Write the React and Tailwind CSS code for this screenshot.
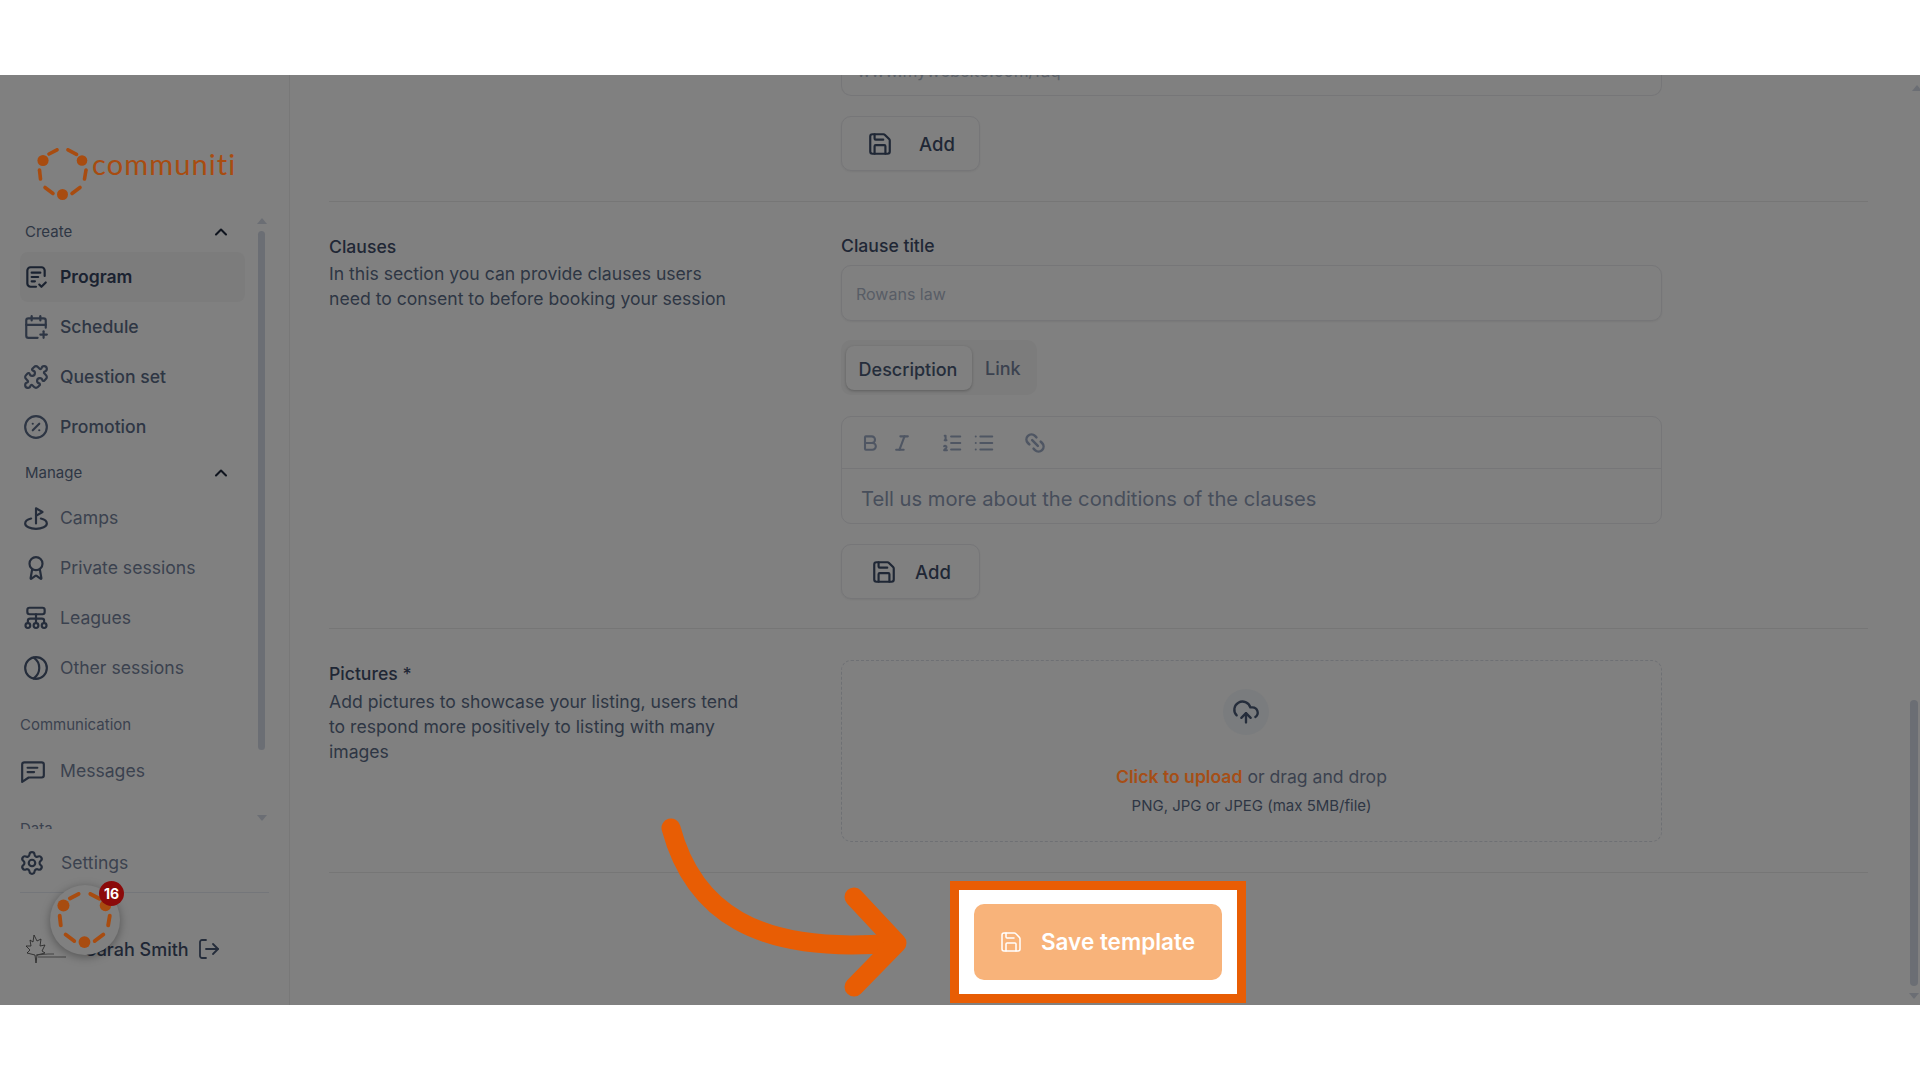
import React from "react";
import { Award, Bold, CalendarPlus, ChevronUp, CirclePercent, CloudUpload, Italic, Link2, List, ListOrdered, LogOut, Puzzle, Save, Settings } from "lucide-react";

const Ring = ({ className }) => (
  <svg viewBox="0 0 52 52" className={className} fill="none">
    <g stroke="#a84c10" strokeWidth="3.6" strokeLinecap="round">
      <path d="M12 6 L20 1.800" />
      <path d="M31 1.800 L39.500 6.300" />
      <path d="M2.500 22 L3.500 31" />
      <path d="M49 22 L47.500 31" />
      <path d="M8 39.500 L16 45.500" />
      <path d="M35 45.500 L43 39.500" />
    </g>
    <circle cx="6" cy="12.500" r="5.600" fill="#a84c10" />
    <circle cx="45" cy="12.500" r="5.300" fill="#a84c10" />
    <circle cx="25.500" cy="46.500" r="5.500" fill="#a84c10" />
  </svg>
);

const ProgramIcon = (p) => (
  <svg viewBox="0 0 24 24" fill="none" stroke="currentColor" strokeWidth="2" strokeLinecap="round" strokeLinejoin="round" {...p}>
    <path d="M20 11V6a3 3 0 0 0-3-3H7a3 3 0 0 0-3 3v12a3 3 0 0 0 3 3h5" />
    <path d="M8 8h8M8 12h6M8 16h3" />
    <path d="M15 19l2 2 4-4" />
  </svg>
);
const CampsIcon = (p) => (
  <svg viewBox="0 0 24 24" fill="none" stroke="currentColor" strokeWidth="2" strokeLinecap="round" strokeLinejoin="round" {...p}>
    <path d="M12 17V3l6 3.500-6 3.500" />
    <path d="M7.500 12.500C4 13.400 2 15 2 17c0 2.800 4.500 5 10 5s10-2.200 10-5c0-2-2-3.600-5.500-4.500" />
  </svg>
);
const LeaguesIcon = (p) => (
  <svg viewBox="0 0 24 24" fill="none" stroke="currentColor" strokeWidth="2" strokeLinecap="round" strokeLinejoin="round" {...p}>
    <rect x="4" y="2.500" width="16" height="6" rx="2" />
    <path d="M12 8.500v4M4.500 16v-1.500a2 2 0 0 1 2-2h11a2 2 0 0 1 2 2V16M12 12.500V16" />
    <circle cx="4.500" cy="19" r="2.200" />
    <circle cx="12" cy="19" r="2.200" />
    <circle cx="19.500" cy="19" r="2.200" />
  </svg>
);
const OtherIcon = (p) => (
  <svg viewBox="0 0 24 24" fill="none" stroke="currentColor" strokeWidth="2" strokeLinecap="round" {...p}>
    <circle cx="12" cy="12" r="10" />
    <path d="M10 2.500c3.500 2.500 5 5.800 5 9.500s-1.500 7-5 9.500" />
  </svg>
);
const MessageIcon = (p) => (
  <svg viewBox="0 0 24 24" fill="none" stroke="currentColor" strokeWidth="2" strokeLinecap="round" strokeLinejoin="round" {...p}>
    <path d="M6 4h14a2 2 0 0 1 2 2v10a2 2 0 0 1-2 2H8l-6 4V6a2 2 0 0 1 2-2z" />
    <path d="M7 9h9M7 13h6" />
  </svg>
);

const Item = ({ icon: Icon, label, active }) => (
  <div className={`flex h-[50px] items-center rounded-lg ${active ? "bg-[#7c7c7c] text-[#1a2230] font-semibold" : "text-[#2e3644] font-medium"} pl-[3px] w-[225px]`}>
    <Icon className="w-[26px] h-[26px] shrink-0" strokeWidth={2} />
    <span className="ml-[11px] text-[17.6px] leading-6">{label}</span>
  </div>
);
const ItemGray = ({ icon: Icon, label, iconClass }) => (
  <div className="flex h-[50px] items-center pl-[3px] w-[225px] text-[#3b424f]">
    <Icon className={`w-[26px] h-[26px] shrink-0 text-[#252d3b] ${iconClass || ""}`} strokeWidth={2} />
    <span className="ml-[11px] text-[17.6px] leading-6">{label}</span>
  </div>
);
const Head = ({ label }) => (
  <div className="flex h-[25px] items-center justify-between pl-[5px] pr-[14px] w-[225px] text-[15px] text-[#2e3644]">
    <span>{label}</span>
    <ChevronUp className="w-5 h-5 text-[#10151f]" strokeWidth={2.5} />
  </div>
);

const AddButton = ({ className }) => (
  <div className={`flex h-[55px] w-[139px] items-center rounded-[10px] border border-[#767678] shadow-[0_1px_2px_rgba(0,0,0,0.06)] text-[#1f2735] ${className}`}>
    <Save className="w-[26px] h-[26px] shrink-0" strokeWidth={2} />
  </div>
);

export default function App() {
  return (
    <div className="w-[1920px] h-[1080px] bg-white overflow-hidden font-['Inter',sans-serif]">
      <div className="h-[75px]" />
      <div className="relative flex h-[930px] bg-[#808080] overflow-hidden">
        <aside className="w-[290px] shrink-0 border-r border-[#787878] pl-[20px] flex flex-col relative">
          <div className="flex items-start h-[145px] pt-[73px] pl-[17px]">
            <Ring className="w-[52px] h-[52px] shrink-0" />
            <span className="font-['Lato',sans-serif] text-[#a84c10] text-[29px] leading-[36px] tracking-[1.1px] mt-[-2px] ml-[3px]">communiti</span>
          </div>
          <div className="h-[610px] overflow-hidden">
            <Head label="Create" />
            <div className="h-[7px]" />
            <Item icon={ProgramIcon} label="Program" active />
            <Item icon={CalendarPlus} label="Schedule" />
            <Item icon={Puzzle} label="Question set" />
            <Item icon={CirclePercent} label="Promotion" />
            <div className="h-[9px]" />
            <Head label="Manage" />
            <div className="h-[7px]" />
            <ItemGray icon={CampsIcon} label="Camps" />
            <ItemGray icon={Award} label="Private sessions" />
            <ItemGray icon={LeaguesIcon} label="Leagues" />
            <ItemGray icon={OtherIcon} label="Other sessions" />
            <div className="h-[20px]" />
            <div className="h-[25px] text-[15px] text-[#3b424f] flex items-center">Communication</div>
            <div className="h-[8px]" />
            <ItemGray icon={MessageIcon} label="Messages" iconClass="-ml-[3px] mr-[3px]" />
            <div className="h-[21px]" />
            <div className="h-[25px] text-[15px] text-[#3b424f] flex items-center">Data</div>
          </div>
          <div className="h-[9px]" />
          <div className="flex h-[50px] items-center w-[225px] text-[#3b424f]">
            <Settings className="w-[26px] h-[26px] text-[#252d3b] shrink-0 -ml-[1px] mr-[16px]" />
            <span className="text-[17.6px]">Settings</span>
          </div>
          <div className="w-[249px] border-t border-[#74767a] mt-[4px]" />
          <div className="flex items-center h-[112px] text-[#1f2735]">
            <svg viewBox="0 0 48 32" className="w-[48px] h-[32px] shrink-0" fill="none" stroke="#222" strokeWidth="0.8">
              <path d="M14 2l3 6 4-2-1 7 5-1-3 6 3 2-8 2-1 8-1-8-8-2 3-3-4-4 5 0-1-6 3 2z" />
              <path d="M16 22l12-1 6 0M18 24h28" stroke="#333" />
            </svg>
            <span className="ml-[17px] text-[18px] font-medium whitespace-nowrap">Sarah Smith</span>
            <LogOut className="w-6 h-6 ml-[8px] text-[#252d3b]" strokeWidth={1.8} />
          </div>

          <div className="absolute left-[258px] top-[156px] w-[7px] h-[519px] rounded-full bg-[#6b6e74]" />
          <div className="absolute left-[257px] top-[143px] w-0 h-0 border-x-[5px] border-x-transparent border-b-[6px] border-b-[#6b6e74]" />
          <div className="absolute left-[257px] top-[740px] w-0 h-0 border-x-[5px] border-x-transparent border-t-[6px] border-t-[#6b6e74]" />

          <div className="absolute left-[50px] top-[810px] w-[70px] h-[70px] rounded-full bg-[#808080] shadow-[0_2px_10px_rgba(0,0,0,0.35)] flex items-center justify-center">
            <Ring className="w-[56px] h-[56px]" />
          </div>
          <div className="absolute left-[99px] top-[806px] w-[25px] h-[25px] rounded-full bg-[#8b0a0a] text-white text-[14px] font-bold flex items-center justify-center">16</div>
        </aside>

        <main className="flex-1 min-w-0 pl-[39px] pr-[52px] relative overflow-hidden">
          <section className="flex h-[127px] border-b border-[#767676]">
            <div className="ml-[512px] flex-1">
              <div className="w-[821px] h-[21px] rounded-b-[10px] border-x border-b border-[#767678] overflow-hidden relative">
                <span className="absolute left-[15px] -top-[16px] text-[#5b6068] text-[17px]">www.mywebsite.com/faq</span>
              </div>
              <AddButton className="mt-[20px] pl-[25px]" />
              <span className="relative -top-[40px] left-[78px] text-[18.500px] font-medium text-[#1f2735]">Add</span>
            </div>
          </section>

          <section className="flex h-[427px] border-b border-[#767676] pt-[31px]">
            <div className="w-[512px] shrink-0 text-[17.6px] leading-[25px] text-[#2e3644]">
              <div className="text-[#1f2735] font-medium mt-[1px]">Clauses</div>
              <div className="mt-[2px]">In this section you can provide clauses users<br />need to consent to before booking your session</div>
            </div>
            <div className="w-[821px]">
              <div className="text-[17.6px] leading-6 font-medium text-[#1f2735] pt-[1px]">Clause title</div>
              <div className="mt-[7px] h-[56px] rounded-[10px] border border-[#767678] shadow-[0_1px_2px_rgba(0,0,0,0.06)] flex items-center pl-[14px] pt-[2px] text-base text-[#585d66]">Rowans law</div>
              <div className="mt-[19px] w-[196px] h-[55px] rounded-[10px] bg-[#7c7c7c] flex items-center p-[5px] pt-[7px] text-[18px] font-medium">
                <div className="h-[44px] w-[126px] -mt-[2px] rounded-lg bg-[#808080] shadow-[0_1px_3px_rgba(0,0,0,0.25)] flex items-center justify-center text-[#252d3b] pt-[3px] pr-[2px]">Description</div>
                <div className="ml-[13px] text-[#3b424f]">Link</div>
              </div>
              <div className="mt-[21px] h-[108px] rounded-[10px] border border-[#767678]">
                <div className="h-[52px] border-b border-[#767678] flex items-center text-[#4f5663] pl-[18px]">
                  <Bold className="w-[20px] h-[20px]" strokeWidth={2.5} />
                  <Italic className="w-[20px] h-[20px] ml-[12px]" strokeWidth={2.5} />
                  <ListOrdered className="w-[22px] h-[22px] ml-[29px]" strokeWidth={2.2} />
                  <List className="w-[22px] h-[22px] ml-[10px]" strokeWidth={2.2} />
                  <Link2 className="w-[24px] h-[24px] ml-[28px] rotate-45" strokeWidth={2.5} />
                </div>
                <div className="h-[55px] flex items-center pl-[19px] pt-[5px] text-[20.16px] text-[#474e5b]">Tell us more about the conditions of the clauses</div>
              </div>
              <AddButton className="mt-[20px] pl-[29px]" />
              <span className="relative -top-[40px] left-[74px] text-[18.500px] font-medium text-[#1f2735]">Add</span>
            </div>
          </section>

          <section className="flex h-[244px] border-b border-[#767676] pt-[31px]">
            <div className="w-[512px] shrink-0 text-[17.6px] leading-[25px] text-[#2e3644]">
              <div className="text-[#1f2735] font-medium mt-[1px]">Pictures *</div>
              <div className="mt-[3px]">Add pictures to showcase your listing, users tend<br />to respond more positively to listing with many<br />images</div>
            </div>
            <div className="w-[821px] h-[182px] rounded-[10px] border border-dashed border-[#6e7074] flex flex-col items-center relative">
              <div className="absolute left-[381px] top-[28px] w-[46px] h-[46px] rounded-full bg-[#7a7c7e] flex items-center justify-center">
                <CloudUpload className="w-[28px] h-[28px] text-[#252d3b]" strokeWidth={2} />
              </div>
              <div className="mt-[104px] text-[17.6px] leading-6 text-[#3b424f]"><span className="font-semibold text-[#a64e16]">Click to upload</span> or drag and drop</div>
              <div className="mt-[7px] text-[15px] leading-5 text-[#2e3644]">PNG, JPG or JPEG (max 5MB/file)</div>
            </div>
          </section>

          <div className="absolute left-[1622px] top-[10px] w-[8px] h-0 border-x-[5px] border-x-transparent border-b-[6px] border-b-[#6b6e74]" />
          <div className="absolute left-[1620px] top-[625px] w-[8px] h-[286px] rounded-full bg-[#6b6e74]" />
          <div className="absolute left-[1619px] top-[918px] w-0 h-0 border-x-[5px] border-x-transparent border-t-[6px] border-t-[#6b6e74]" />
        </main>

        <svg className="absolute left-[655px] top-[740px] w-[260px] h-[190px]" viewBox="0 0 260 190" fill="none" stroke="#e85d04" strokeLinecap="round" strokeLinejoin="round">
          <path d="M16 13 C 38 95, 100 140, 238 128" strokeWidth="19" />
          <path d="M199 82 L 242 128 L 199 172" strokeWidth="19" />
        </svg>
        <div className="absolute left-[950px] top-[806px] w-[296px] h-[122px] bg-white border-[9px] border-[#e85d04] flex items-center justify-center">
          <div className="w-[248px] h-[76px] rounded-[10px] bg-[#f8b37a] flex items-center justify-center text-white">
            <Save className="w-[24px] h-[24px] -ml-[2px]" strokeWidth={1.5} />
            <span className="ml-[18px] text-[22.500px] font-semibold">Save template</span>
          </div>
        </div>
      </div>
    </div>
  );
}
